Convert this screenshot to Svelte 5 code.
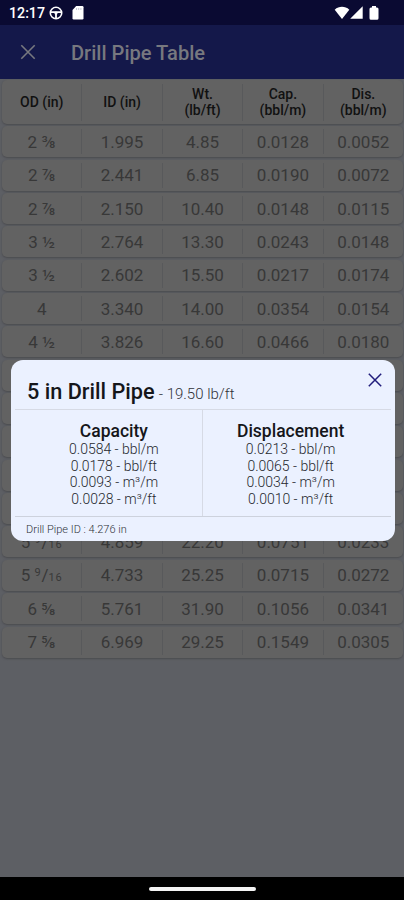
<script>
  const columns = [['OD (in)'], ['ID (in)'], ['Wt.', '(lb/ft)'], ['Cap.', '(bbl/m)'], ['Dis.', '(bbl/m)']];
  const blank = ['', '', '', '', ''];
  const rows = [
    ['2 ⅜', '1.995', '4.85', '0.0128', '0.0052'],
    ['2 ⅞', '2.441', '6.85', '0.0190', '0.0072'],
    ['2 ⅞', '2.150', '10.40', '0.0148', '0.0115'],
    ['3 ½', '2.764', '13.30', '0.0243', '0.0148'],
    ['3 ½', '2.602', '15.50', '0.0217', '0.0174'],
    ['4', '3.340', '14.00', '0.0354', '0.0154'],
    ['4 ½', '3.826', '16.60', '0.0466', '0.0180'],
    blank, blank, blank, blank, blank,
    ['5 9/16', '4.859', '22.20', '0.0751', '0.0233'],
    ['5 9/16', '4.733', '25.25', '0.0715', '0.0272'],
    ['6 ⅝', '5.761', '31.90', '0.1056', '0.0341'],
    ['7 ⅝', '6.969', '29.25', '0.1549', '0.0305']
  ];
  const details = [
    { title: 'Capacity', values: ['0.0584 - bbl/m', '0.0178 - bbl/ft', '0.0093 - m³/m', '0.0028 - m³/ft'] },
    { title: 'Displacement', values: ['0.0213 - bbl/m', '0.0065 - bbl/ft', '0.0034 - m³/m', '0.0010 - m³/ft'] }
  ];
</script>

<div class="screen">
  <div class="status">
    <span class="clock">12:17</span>
    <svg class="wheel" width="14" height="14" viewBox="0 0 14 14" fill="none" stroke="#fff">
      <circle cx="7" cy="7" r="5.7" stroke-width="1.6" />
      <path d="M1.5 6.2h11M7 7v5.5" stroke-width="1.8" />
      <circle cx="7" cy="7" r="1.6" fill="#fff" stroke="none" />
    </svg>
    <svg class="card-icon" width="12" height="14" viewBox="0 0 12 14">
      <path d="M4.2 0H10.3Q11.5 0 11.5 1.2V12.3Q11.5 13.5 10.3 13.5H1.7Q.5 13.5 .5 12.3V4Z" fill="#fff" />
      <path d="M4.5 2v2M6.7 2v2M8.9 2v2" stroke="#b9bac8" stroke-width=".8" />
    </svg>
    <div class="signals">
      <svg width="16" height="14" viewBox="0 0 16 14"><path d="M.7 3.7C5-.1 11-.1 15.3 3.7L8 13Z" fill="#fff" /></svg>
      <svg width="13" height="13" viewBox="0 0 13 13"><path d="M12.7.2V12.8H.2Z" fill="#fff" /></svg>
      <svg class="battery" width="10" height="14" viewBox="0 0 10 14"><path d="M3 0H7V1.4H8Q9.5 1.4 9.5 3V12.2Q9.5 13.8 8 13.8H2Q.5 13.8 .5 12.2V3Q.5 1.4 2 1.4H3Z" fill="#fff" /></svg>
    </div>
  </div>
  <header>
    <svg width="16" height="16" viewBox="0 0 16 16"><path d="M1.3 1.3L14.7 14.7M14.7 1.3L1.3 14.7" stroke="#77787f" stroke-width="1.6" /></svg>
    <h1>Drill Pipe Table</h1>
  </header>
  <main>
    <div class="row head">
      {#each columns as lines}
        <div class="cell">{#each lines as line}<span>{line}</span>{/each}</div>
      {/each}
    </div>
    {#each rows as row}
      <div class="row">
        {#each row as value}
          <div class="cell">
            {#if value === '5 9/16'}
              <span class="fraction">5 <i class="up">9</i>/<i>16</i></span>
            {:else}
              {value}
            {/if}
          </div>
        {/each}
      </div>
    {/each}
  </main>
  <div class="nav"><div class="handle"></div></div>

  <section class="dialog">
    <div class="title">
      <strong>5 in Drill Pipe</strong><span>- 19.50 lb/ft</span>
    </div>
    <div class="details">
      {#each details as group}
        <div class="group">
          <h2>{group.title}</h2>
          {#each group.values as value}<p>{value}</p>{/each}
        </div>
      {/each}
    </div>
    <div class="foot">Drill Pipe ID : 4.276 in</div>
    <svg class="close" width="14" height="14" viewBox="0 0 14 14"><path d="M.8 .8L13.2 13.2M13.2 .8L.8 13.2" stroke="#211d7c" stroke-width="1.5" /></svg>
  </section>
</div>

<style>
  .screen {
    position: relative;
    width: 404px;
    height: 900px;
    overflow: hidden;
    display: flex;
    flex-direction: column;
    background: #5d5f64;
    font-family: Roboto, "Noto Sans", sans-serif;
  }
  .status {
    height: 25px;
    flex: none;
    box-sizing: border-box;
    padding: 0 25px 0 9px;
    display: flex;
    align-items: center;
    background: #0a0a32;
    color: #fff;
  }
  .clock { font-size: 14.2px; font-weight: 500; width: 40px; white-space: nowrap; }
  .wheel { margin-top: 1px; }
  .card-icon { margin-left: 9px; }
  .signals { margin-left: auto; display: flex; align-items: center; }
  .battery { margin-left: 6px; }
  header {
    height: 54px;
    flex: none;
    display: flex;
    align-items: center;
    padding-left: 20px;
    background: #14184a;
  }
  h1 { margin: 1px 0 0 35px; font-size: 20.1px; line-height: 24px; font-weight: 500; color: #77787f; white-space: nowrap; }
  main {
    flex: 1;
    min-height: 0;
    display: flex;
    flex-direction: column;
    gap: 2.35px;
    padding: 1px 1px 0 2px;
  }
  .row {
    height: 31px;
    flex: none;
    display: flex;
    align-items: center;
    border-radius: 5px;
    background: #626262;
    box-shadow: 0 1px 2px 0 #4a4b4e;
    font-size: 17px;
    letter-spacing: -0.02px;
    color: #383838;
  }
  .cell {
    flex: 1;
    display: flex;
    flex-direction: column;
    align-items: center;
    justify-content: center;
    height: 25px;
    border-right: 1px solid #58595b;
    white-space: nowrap;
  }
  .cell:last-child { border-right: 0; }
  .fraction i { font-style: normal; font-size: 11px; letter-spacing: 0.8px; }
  .fraction .up { position: relative; top: -5px; }
  .head {
    height: 44px;
    font-size: 14px;
    line-height: 16.5px;
    font-weight: 500;
    letter-spacing: 0;
    color: #111;
  }
  .head .cell { height: 37px; }
  .nav {
    height: 23px;
    flex: none;
    display: flex;
    justify-content: center;
    align-items: center;
    background: #000;
  }
  .handle { width: 107px; height: 4px; border-radius: 2px; background: #f4f4f4; }
  .dialog {
    position: absolute;
    left: 11px;
    top: 360px;
    width: 383.5px;
    height: 180.5px;
    box-sizing: border-box;
    padding: 0 4px;
    display: flex;
    flex-direction: column;
    border-radius: 12px;
    background: #ebf1ff;
    color: #15161a;
  }
  .title {
    height: 50px;
    flex: none;
    box-sizing: border-box;
    padding: 19px 0 0 12px;
    border-bottom: 1px solid #d6dae5;
    display: flex;
    align-items: baseline;
    white-space: nowrap;
  }
  .title strong { font-size: 21.7px; line-height: 25px; font-weight: 500; }
  .title span { font-size: 15px; margin-left: 4px; font-weight: 300; color: #303238; }
  .details { height: 107px; flex: none; box-sizing: border-box; padding: 0 12px 0 11px; display: flex; border-bottom: 1px solid #cdd2dd; }
  .group {
    flex: 1;
    box-sizing: border-box;
    padding-top: 11px;
    display: flex;
    flex-direction: column;
    align-items: center;
  }
  .group:first-child { border-right: 1px solid #d6dae5; }
  h2 { margin: 0; font-size: 17.5px; line-height: 20px; font-weight: 500; }
  p { margin: 0; font-size: 14px; line-height: 16.5px; font-weight: 300; color: #26282e; white-space: nowrap; }
  .foot { padding: 6px 0 0 11px; font-size: 11px; line-height: 13px; font-weight: 300; color: #303238; white-space: nowrap; }
  .close { position: absolute; right: 13px; top: 13px; }
</style>
